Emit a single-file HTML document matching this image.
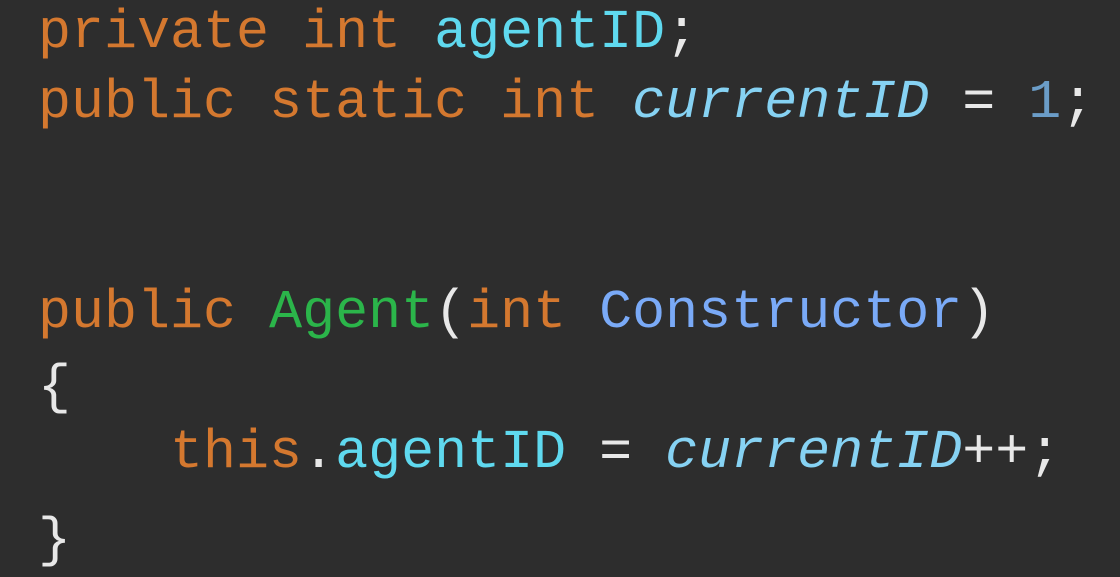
<!DOCTYPE html>
<html><head><style>
html,body{margin:0;padding:0;background:#2d2d2d;width:1120px;height:577px;overflow:hidden}
pre{margin:0;position:absolute;left:38px;top:-2px;font-family:"Liberation Mono",monospace;font-size:55px;line-height:70px;color:#e8e8e8;white-space:pre}
.k{color:#d4782f}.f{color:#5fd9ef}.i{color:#86d2f3;font-style:italic}.n{color:#6b9dc8}.g{color:#2bb54a}.b{color:#7aaaf7}
.br1{position:relative;top:5px}.br2{position:relative;top:18px}
</style></head><body>
<pre><span class="k">private</span> <span class="k">int</span> <span class="f">agentID</span>;
<span class="k">public</span> <span class="k">static</span> <span class="k">int</span> <span class="i">currentID</span> = <span class="n">1</span>;


<span class="k">public</span> <span class="g">Agent</span>(<span class="k">int</span> <span class="b">Constructor</span>)
<span class="br1">{</span>
    <span class="k">this</span>.<span class="f">agentID</span> = <span class="i">currentID</span>++;
<span class="br2">}</span></pre>
</body></html>
